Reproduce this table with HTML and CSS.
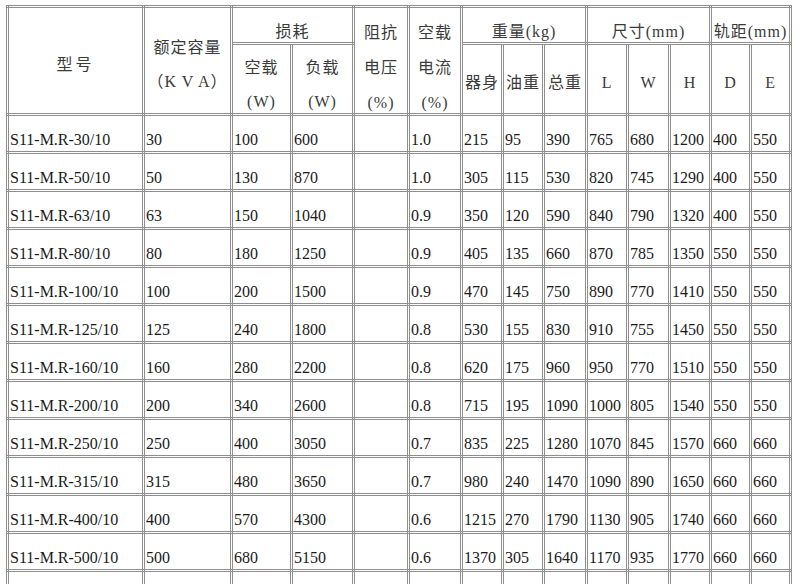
FILE: index.html
```html
<!DOCTYPE html>
<html lang="zh-CN">
<head>
<meta charset="utf-8">
<title>S11-M.R 变压器参数表</title>
<link rel="stylesheet" href="styles.css">
</head>
<body>
<table class="spec">
  <colgroup>
    <col class="c136"><col class="c88"><col class="c60"><col class="c62"><col class="c55"><col class="c53">
    <col class="c41"><col class="c41"><col class="c43"><col class="c41"><col class="c42"><col class="c41"><col class="c40"><col class="c40">
  </colgroup>
  <thead>
    <tr class="r1">
      <th rowspan="2" class="h-model"><div class="p-model">型号</div></th>
      <th rowspan="2" class="h-cap"><div class="p-cap">额定容量<br>（K V A）</div></th>
      <th colspan="2" class="h-group"><div class="p-group">损耗</div></th>
      <th rowspan="2" class="h-tall"><div class="p-tall">阻抗<br>电压<br>(%)</div></th>
      <th rowspan="2" class="h-tall"><div class="p-tall">空载<br>电流<br>(%)</div></th>
      <th colspan="3" class="h-group"><div class="p-group">重量(kg)</div></th>
      <th colspan="3" class="h-group"><div class="p-group">尺寸(mm)</div></th>
      <th colspan="2" class="h-group"><div class="p-group">轨距(mm)</div></th>
    </tr>
    <tr class="r2">
      <th><div class="p-two">空载<br>(W)</div></th>
      <th><div class="p-two">负载<br>(W)</div></th>
      <th class="h-one">器身</th>
      <th class="h-one">油重</th>
      <th class="h-one">总重</th>
      <th class="h-one">L</th>
      <th class="h-one">W</th>
      <th class="h-one">H</th>
      <th class="h-one">D</th>
      <th class="h-one">E</th>
    </tr>
  </thead>
  <tbody>
    <tr><td>S11-M.R-30/10</td><td>30</td><td>100</td><td>600</td><td></td><td>1.0</td><td>215</td><td>95</td><td>390</td><td>765</td><td>680</td><td>1200</td><td>400</td><td>550</td></tr>
    <tr><td>S11-M.R-50/10</td><td>50</td><td>130</td><td>870</td><td></td><td>1.0</td><td>305</td><td>115</td><td>530</td><td>820</td><td>745</td><td>1290</td><td>400</td><td>550</td></tr>
    <tr><td>S11-M.R-63/10</td><td>63</td><td>150</td><td>1040</td><td></td><td>0.9</td><td>350</td><td>120</td><td>590</td><td>840</td><td>790</td><td>1320</td><td>400</td><td>550</td></tr>
    <tr><td>S11-M.R-80/10</td><td>80</td><td>180</td><td>1250</td><td></td><td>0.9</td><td>405</td><td>135</td><td>660</td><td>870</td><td>785</td><td>1350</td><td>550</td><td>550</td></tr>
    <tr><td>S11-M.R-100/10</td><td>100</td><td>200</td><td>1500</td><td></td><td>0.9</td><td>470</td><td>145</td><td>750</td><td>890</td><td>770</td><td>1410</td><td>550</td><td>550</td></tr>
    <tr><td>S11-M.R-125/10</td><td>125</td><td>240</td><td>1800</td><td></td><td>0.8</td><td>530</td><td>155</td><td>830</td><td>910</td><td>755</td><td>1450</td><td>550</td><td>550</td></tr>
    <tr><td>S11-M.R-160/10</td><td>160</td><td>280</td><td>2200</td><td></td><td>0.8</td><td>620</td><td>175</td><td>960</td><td>950</td><td>770</td><td>1510</td><td>550</td><td>550</td></tr>
    <tr><td>S11-M.R-200/10</td><td>200</td><td>340</td><td>2600</td><td></td><td>0.8</td><td>715</td><td>195</td><td>1090</td><td>1000</td><td>805</td><td>1540</td><td>550</td><td>550</td></tr>
    <tr><td>S11-M.R-250/10</td><td>250</td><td>400</td><td>3050</td><td></td><td>0.7</td><td>835</td><td>225</td><td>1280</td><td>1070</td><td>845</td><td>1570</td><td>660</td><td>660</td></tr>
    <tr><td>S11-M.R-315/10</td><td>315</td><td>480</td><td>3650</td><td></td><td>0.7</td><td>980</td><td>240</td><td>1470</td><td>1090</td><td>890</td><td>1650</td><td>660</td><td>660</td></tr>
    <tr><td>S11-M.R-400/10</td><td>400</td><td>570</td><td>4300</td><td></td><td>0.6</td><td>1215</td><td>270</td><td>1790</td><td>1130</td><td>905</td><td>1740</td><td>660</td><td>660</td></tr>
    <tr><td>S11-M.R-500/10</td><td>500</td><td>680</td><td>5150</td><td></td><td>0.6</td><td>1370</td><td>305</td><td>1640</td><td>1170</td><td>935</td><td>1770</td><td>660</td><td>660</td></tr>
    <tr><td></td><td></td><td></td><td></td><td></td><td></td><td></td><td></td><td></td><td></td><td></td><td></td><td></td><td></td></tr>
  </tbody>
</table>
</body>
</html>
```

FILE: styles.css
```css
html, body {
  overflow: hidden;
  background: #ffffff;
}
body {
  margin: 5px 0 0 6px;
  font-family: "Liberation Serif", "Noto Sans CJK SC", serif;
  color: #1c1c1c;
}
.spec {
  border-collapse: collapse;
  table-layout: fixed;
  width: 786px;
  font-size: 16px;
}
.c136 { width: 136px; }
.c88 { width: 88px; }
.c60 { width: 60px; }
.c62 { width: 62px; }
.c55 { width: 55px; }
.c53 { width: 53px; }
.c43 { width: 43px; }
.c42 { width: 42px; }
.c41 { width: 41px; }
.c40 { width: 40px; }

.spec th,
.spec td {
  border: 3px double #8e8e8e;
  padding: 0;
  overflow: visible;
  white-space: nowrap;
}
.spec th {
  font-weight: normal;
  text-align: center;
  vertical-align: top;
  color: #3a3a3a;
  letter-spacing: 1px;
}
.r1 { height: 37px; }
.r2 { height: 71px; }
.spec tbody tr { height: 38px; }

.spec td {
  text-align: left;
  vertical-align: middle;
  padding: 12px 0 0 1px;
  line-height: 18px;
  color: #1a1a1a;
}

.p-model {
  padding-top: 40px;
  line-height: 34px;
  letter-spacing: 3px;
}
.p-cap {
  padding-top: 23px;
  line-height: 34px;
}
.p-group {
  padding-top: 14px;
  line-height: 20px;
  height: 20px;
}
.p-tall {
  padding-top: 7px;
  line-height: 35px;
  height: 96px;
}
.p-two {
  padding-top: 6px;
  line-height: 34px;
  height: 60px;
}
.h-one {
  vertical-align: middle !important;
  padding-top: 8px !important;
  line-height: 20px;
}
```
